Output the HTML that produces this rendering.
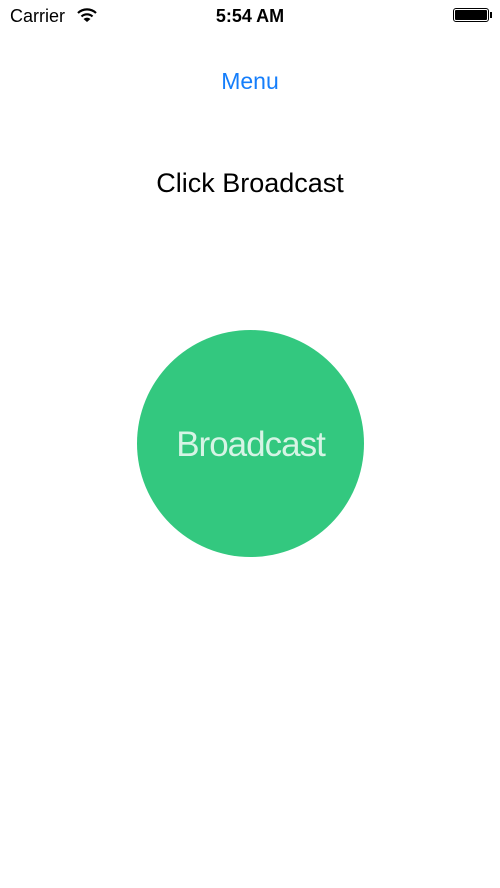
<!DOCTYPE html>
<html><head><meta charset="utf-8"><style>
html,body{margin:0;padding:0;width:500px;height:888px;background:#fff;overflow:hidden;font-family:"Liberation Sans",sans-serif;position:relative}
.a{position:absolute}
</style></head><body>
<div class="a" style="left:10px;top:6px;font-size:18px;color:#000">Carrier</div>
<svg class="a" style="left:77px;top:7px" width="20" height="16" viewBox="0 0 20 16">
<path d="M1 6 A13 13 0 0 1 19 6" stroke="#000" stroke-width="2.2" fill="none"/>
<path d="M4.5 9.5 A8 8 0 0 1 15.5 9.5" stroke="#000" stroke-width="2.2" fill="none"/>
<path d="M10 15 L6.5 12 A5 5 0 0 1 13.5 12 Z" fill="#000"/>
</svg>
<div class="a" style="left:0;width:500px;top:6px;text-align:center;font-size:18px;font-weight:bold;color:#000">5:54 AM</div>
<div class="a" style="left:453px;top:8px;width:36px;height:14px;border:1px solid #000;border-radius:3px;box-sizing:border-box;padding:1px"><div style="background:#000;width:100%;height:100%;border-radius:1px"></div></div>
<div class="a" style="left:490px;top:12px;width:2px;height:6px;background:#000"></div>
<div class="a" style="left:0;width:500px;top:68px;text-align:center;font-size:23px;color:#157efb">Menu</div>
<div class="a" style="left:0;width:500px;top:168px;text-align:center;font-size:27px;color:#000">Click Broadcast</div>
<div class="a" style="left:137px;top:330px;width:227px;height:227px;border-radius:50%;background:#33c87f"></div>
<div class="a" style="left:137px;width:227px;top:425px;text-align:center;font-size:35px;color:rgba(255,255,255,0.8);letter-spacing:-1px">Broadcast</div>
</body></html>
